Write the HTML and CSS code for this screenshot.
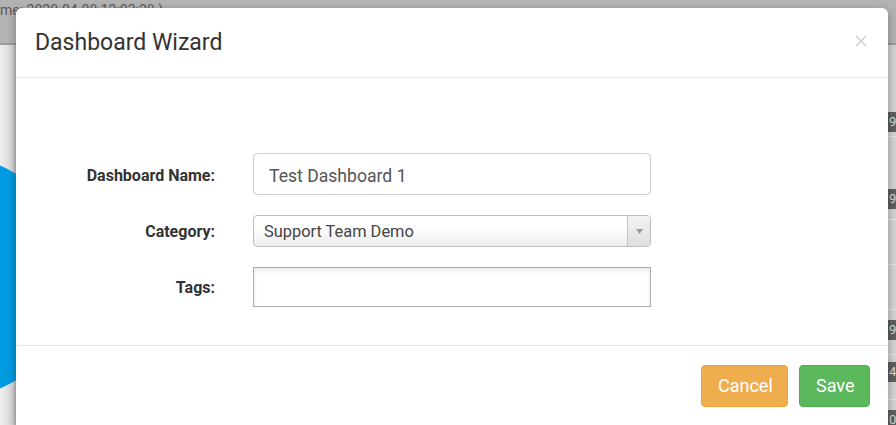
FILE: index.html
```html
<!DOCTYPE html>
<html>
<head>
<meta charset="utf-8">
<link rel="stylesheet" href="styles.css">
</head>
<body>
<div class="page">
  <div class="topbar"><span class="stamp">me: 2020-04-08 12:03:28 )</span></div>
  <div class="main">
    <div class="left-col"><div class="circle"></div></div>
    <div class="center-col"></div>
    <div class="right-col">
      <div class="row r1"><span class="badge">9</span></div>
      <div class="row r2"><span class="badge">9</span></div>
      <div class="row r3"></div>
      <div class="row r4"></div>
      <div class="row r5"><span class="badge">9</span></div>
      <div class="row r6"><span class="badge">4</span></div>
      <div class="row r7"><span class="badge">0</span></div>
    </div>
  </div>
</div>

<div class="modal">
  <div class="modal-header">
    <h4 class="modal-title">Dashboard Wizard</h4>
    <button class="close" aria-label="Close">
      <svg width="12" height="12" viewBox="0 0 12 12"><path d="M1 1L11 11M11 1L1 11" stroke="#c9c9c9" stroke-width="1.3" fill="none"/></svg>
    </button>
  </div>
  <div class="modal-body">
    <div class="form-row">
      <label class="lbl">Dashboard Name:</label>
      <div class="input name-input">Test Dashboard 1</div>
    </div>
    <div class="form-row">
      <label class="lbl">Category:</label>
      <div class="select">
        <span class="select-text">Support Team Demo</span>
        <span class="select-arrow"><svg width="7" height="5" viewBox="0 0 7 5"><path d="M0 0H7L3.5 5Z" fill="#9a9a9a"/></svg></span>
      </div>
    </div>
    <div class="form-row">
      <label class="lbl lbl-tags">Tags:</label>
      <div class="input tags-input"></div>
    </div>
  </div>
  <div class="modal-footer">
    <button class="btn btn-warning">Cancel</button>
    <button class="btn btn-success">Save</button>
  </div>
</div>
</body>
</html>
```

FILE: styles.css
```css
* { box-sizing: border-box; }
html, body { margin: 0; padding: 0; }
body {
  width: 896px;
  height: 425px;
  overflow: hidden;
  font-family: Roboto, "Liberation Sans", sans-serif;
  background: #e4e4e4;
  position: relative;
}

/* background page (dimmed) */
.page { display: flex; flex-direction: column; height: 425px; }
.topbar {
  height: 45px;
  flex: none;
  background: #b3b3b3;
  border-bottom: 2px solid #9d9d9d;
  padding: 3px 0 0 0;
  overflow: hidden;
}
.stamp {
  display: block;
  font-size: 14px;
  color: #5a5a5a;
  line-height: 14px;
  white-space: nowrap;
}
.main { flex: 1; display: flex; }
.left-col {
  width: 16px;
  position: relative;
  overflow: hidden;
  background: linear-gradient(to right, #eeeeee, #d6d6d6 80%, #b9b9b9);
}
.circle {
  position: absolute;
  left: -168px;
  top: 111px;
  width: 242px;
  height: 242px;
  border-radius: 50%;
  background: linear-gradient(to right, #009be0 80%, #0083bd);
}
.center-col { flex: 1; }
.right-col {
  width: 8px;
  background: #d2d2d2;
  display: flex;
  flex-direction: column;
  overflow: hidden;
}
.row {
  flex: none;
  border-bottom: 1px solid #e6e6e6;
  display: flex;
}
.r1 { height: 92px; align-items: flex-end; padding-bottom: 4px; }
.r2 { height: 83px; align-items: flex-end; padding-bottom: 10px; }
.r3 { height: 45px; }
.r4 { height: 45px; }
.r5 { height: 45px; align-items: flex-start; padding-top: 10px; }
.r6 { height: 45px; align-items: flex-start; padding-top: 7px; }
.r7 { height: 30px; align-items: flex-start; padding-top: 10px; }
.badge {
  display: block;
  width: 8px;
  height: 20px;
  background: #5f5f5f;
  color: #d8d8d8;
  font-size: 13px;
  line-height: 20px;
  padding-left: 1px;
  overflow: hidden;
}

/* modal */
.modal {
  position: absolute;
  left: 16px;
  top: 8px;
  width: 872px;
  height: 417px;
  background: #fff;
  border-radius: 6px 6px 0 0;
  box-shadow: 0 3px 9px rgba(0,0,0,0.35);
  display: flex;
  flex-direction: column;
  overflow: hidden;
}
.modal-header {
  height: 70px;
  flex: none;
  border-bottom: 1px solid #e5e5e5;
  display: flex;
  align-items: center;
  justify-content: space-between;
  padding: 0 20px 0 19px;
}
.modal-title {
  margin: 0;
  font-size: 23px;
  font-weight: 400;
  color: #333;
  line-height: 24px;
}
.close {
  border: 0;
  background: none;
  padding: 0;
  margin-top: -4px;
  width: 14px;
  height: 14px;
  display: flex;
  align-items: center;
  justify-content: center;
}
.modal-body {
  height: 268px;
  flex: none;
  border-bottom: 1px solid #e5e5e5;
  padding-top: 75px;
  display: flex;
  flex-direction: column;
  gap: 19px;
}
.form-row {
  display: flex;
  align-items: center;
}
.lbl {
  width: 199px;
  text-align: right;
  font-size: 16px;
  font-weight: 700;
  color: #333;
  margin-right: 38px;
  position: relative;
  top: 1px;
}
.input {
  width: 398px;
  background: #fff;
}
.name-input {
  height: 42px;
  border: 1px solid #cccccc;
  border-radius: 4px;
  padding: 2px 15px 0;
  font-size: 17.6px;
  line-height: 40px;
  color: #555;
}
.select {
  width: 398px;
  height: 32px;
  border: 1px solid #bdbdbd;
  border-radius: 4px;
  background: linear-gradient(to bottom, #ffffff 40%, #ececec);
  display: flex;
  align-items: center;
  margin-top: 1px;
}
.select-text {
  flex: 1;
  padding-left: 10px;
  font-size: 16.4px;
  color: #444;
}
.select-arrow {
  width: 23px;
  height: 100%;
  border-left: 1px solid #c4c4c4;
  display: flex;
  align-items: center;
  justify-content: center;
  background: linear-gradient(to bottom, #f4f4f4, #dedede);
  border-radius: 0 3px 3px 0;
}
.tags-input {
  height: 40px;
  border: 1px solid #aaaaaa;
  box-shadow: inset 0 3px 5px rgba(0,0,0,0.07);
  margin-top: 1px;
}
.modal-footer {
  display: flex;
  justify-content: flex-end;
  gap: 11px;
  padding: 19px 18px 0 0;
}
.btn {
  height: 42px;
  border-radius: 4px;
  font-family: Roboto, "Liberation Sans", sans-serif;
  font-size: 18px;
  color: #fff;
  padding: 0 16px;
  line-height: 40px;
}
.btn-warning { background: #f0ad4e; border: 1px solid #eea236; width: 87px; }
.btn-success { background: #5cb85c; border: 1px solid #4cae4c; width: 71px; }
```
